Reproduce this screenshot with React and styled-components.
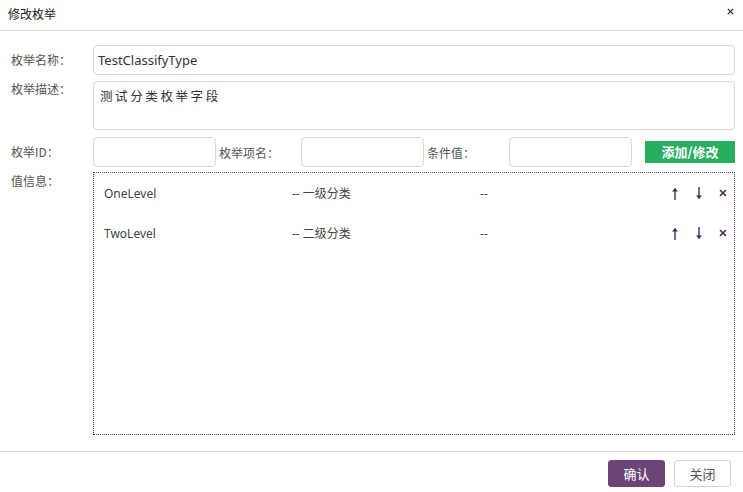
import React from 'react';
import styled, { createGlobalStyle } from 'styled-components';

const FONT = `"Noto Sans", "Noto Sans CJK SC", sans-serif`;
const CJK_FONT = `"Noto Sans CJK SC", "Noto Sans", sans-serif`;

const GlobalStyle = createGlobalStyle`
  html, body {
    margin: 0;
    padding: 0;
    background: #fff;
  }
  body {
    font-family: ${FONT};
    color: #333;
  }
`;

const values = [
  { name: 'OneLevel', label: '-- 一级分类', cond: '--' },
  { name: 'TwoLevel', label: '-- 二级分类', cond: '--' },
];

const UpIcon = () => (
  <svg width="8" height="13" viewBox="0 0 8 13">
    <path d="M4 1.5V13" stroke="#2d3560" strokeWidth="1.4" fill="none" />
    <path d="M1 4.5L4 1L7 4.5Z" fill="#2d3560" />
  </svg>
);

const DownIcon = () => (
  <svg width="8" height="13" viewBox="0 0 8 13">
    <path d="M4 0V11.5" stroke="#2d3560" strokeWidth="1.4" fill="none" />
    <path d="M1 8.5L4 12L7 8.5Z" fill="#2d3560" />
  </svg>
);

const CrossIcon = ({ size }) => (
  <svg width={size} height={size} viewBox="0 0 8 8">
    <path d="M1 1L7 7M7 1L1 7" stroke="#4a2550" strokeWidth="1.6" fill="none" />
  </svg>
);

function App() {
  return (
    <Dialog>
      <GlobalStyle />
      <Header>
        <Title>修改枚举</Title>
        <CloseButton>
          <CrossIcon size={7} />
        </CloseButton>
      </Header>

      <Body>
        <Row>
          <Label>枚举名称：</Label>
          <Input defaultValue="TestClassifyType" />
        </Row>

        <Row top gap={6}>
          <Label top>枚举描述：</Label>
          <TextArea defaultValue="测试分类枚举字段" />
        </Row>

        <Row gap={7}>
          <Label>枚举ID：</Label>
          <SmallInput />
          <InlineLabel>枚举项名：</InlineLabel>
          <SmallInput />
          <InlineLabel>条件值：</InlineLabel>
          <SmallInput />
          <AddButton>添加/修改</AddButton>
        </Row>

        <Row top gap={5}>
          <Label list>值信息：</Label>
          <ValueList>
            {values.map(item => (
              <ValueRow key={item.name}>
                <Cell>{item.name}</Cell>
                <Cell>{item.label}</Cell>
                <Cell>{item.cond}</Cell>
                <Actions>
                  <IconButton><UpIcon /></IconButton>
                  <IconButton><DownIcon /></IconButton>
                  <IconButton><CrossIcon size={8} /></IconButton>
                </Actions>
              </ValueRow>
            ))}
          </ValueList>
        </Row>
      </Body>

      <Footer>
        <PrimaryButton>确认</PrimaryButton>
        <DefaultButton>关闭</DefaultButton>
      </Footer>
    </Dialog>
  );
}

const Dialog = styled.div`
  width: 743px;
  height: 492px;
  display: flex;
  flex-direction: column;
  background: #fff;
`;

const Header = styled.div`
  height: 31px;
  border-bottom: 1px solid #d8d8d8;
  display: flex;
  align-items: center;
  justify-content: space-between;
  padding: 0 9px 3px 8px;
  box-sizing: border-box;
`;

const Title = styled.span`
  font-family: ${CJK_FONT};
  font-size: 12px;
  color: #222;
`;

const CloseButton = styled.span`
  display: flex;
  align-items: center;
  margin-top: -4px;
`;

const Body = styled.div`
  padding: 14px 8px 0 11px;
`;

const Row = styled.div`
  display: flex;
  align-items: ${props => (props.top ? 'flex-start' : 'center')};
  margin-top: ${props => (props.gap || 0) + 'px'};
`;

const Label = styled.label`
  width: 82px;
  flex-shrink: 0;
  font-family: ${CJK_FONT};
  font-size: 12px;
  color: #555;
  padding-top: ${props => (props.top && !props.list ? '1px' : '0')};
  line-height: ${props => (props.list ? '18px' : props.top ? '14px' : '30px')};
`;

const InlineLabel = styled.label`
  width: 82px;
  padding-left: 3px;
  flex-shrink: 0;
  font-family: ${CJK_FONT};
  font-size: 12px;
  color: #555;
`;

const Input = styled.input`
  flex: 1;
  height: 30px;
  box-sizing: border-box;
  border: 1px solid #d9d9d9;
  border-radius: 4px;
  padding: 0 4px;
  font-family: ${FONT};
  font-size: 13px;
  color: #333;
  outline: none;
`;

const SmallInput = styled(Input)`
  flex: none;
  width: 123px;
`;

const TextArea = styled.textarea`
  flex: 1;
  height: 49px;
  box-sizing: border-box;
  border: 1px solid #d9d9d9;
  border-radius: 4px;
  padding: 6px 6px;
  font-family: ${CJK_FONT};
  font-size: 12.5px;
  letter-spacing: 2.6px;
  line-height: 16px;
  color: #333;
  resize: none;
  outline: none;
`;

const AddButton = styled.button`
  margin-left: 13px;
  width: 90px;
  height: 22px;
  border: none;
  background: #27ae60;
  color: #fff;
  font-family: ${CJK_FONT};
  font-size: 13px;
  font-weight: bold;
  padding: 0;
  line-height: 22px;
`;

const ValueList = styled.div`
  flex: 1;
  height: 263px;
  box-sizing: border-box;
  border: 1px dotted #2c3e7a;
  padding-left: 10px;
`;

const ValueRow = styled.div`
  display: flex;
  align-items: center;
  height: 40px;
`;

const Cell = styled.span`
  width: 188px;
  font-size: 12px;
  color: #444;
`;

const Actions = styled.div`
  margin-left: auto;
  display: flex;
  align-items: center;
  gap: 16px;
  padding-right: 7px;
`;

const IconButton = styled.span`
  display: flex;
  align-items: center;
`;

const Footer = styled.div`
  margin-top: auto;
  height: 41px;
  box-sizing: border-box;
  border-top: 1px solid #d8d8d8;
  display: flex;
  justify-content: flex-end;
  align-items: flex-start;
  gap: 9px;
  padding: 8px 12px 0 0;
`;

const PrimaryButton = styled.button`
  width: 57px;
  height: 27px;
  border: 1px solid #6a4478;
  border-radius: 3px;
  background: #6b4478;
  color: #fff;
  font-family: ${CJK_FONT};
  font-size: 13px;
  padding: 0;
`;

const DefaultButton = styled.button`
  width: 57px;
  height: 27px;
  border: 1px solid #d5d5d5;
  border-radius: 3px;
  background: #fff;
  color: #555;
  font-family: ${CJK_FONT};
  font-size: 13px;
  padding: 0;
`;

export default App;
